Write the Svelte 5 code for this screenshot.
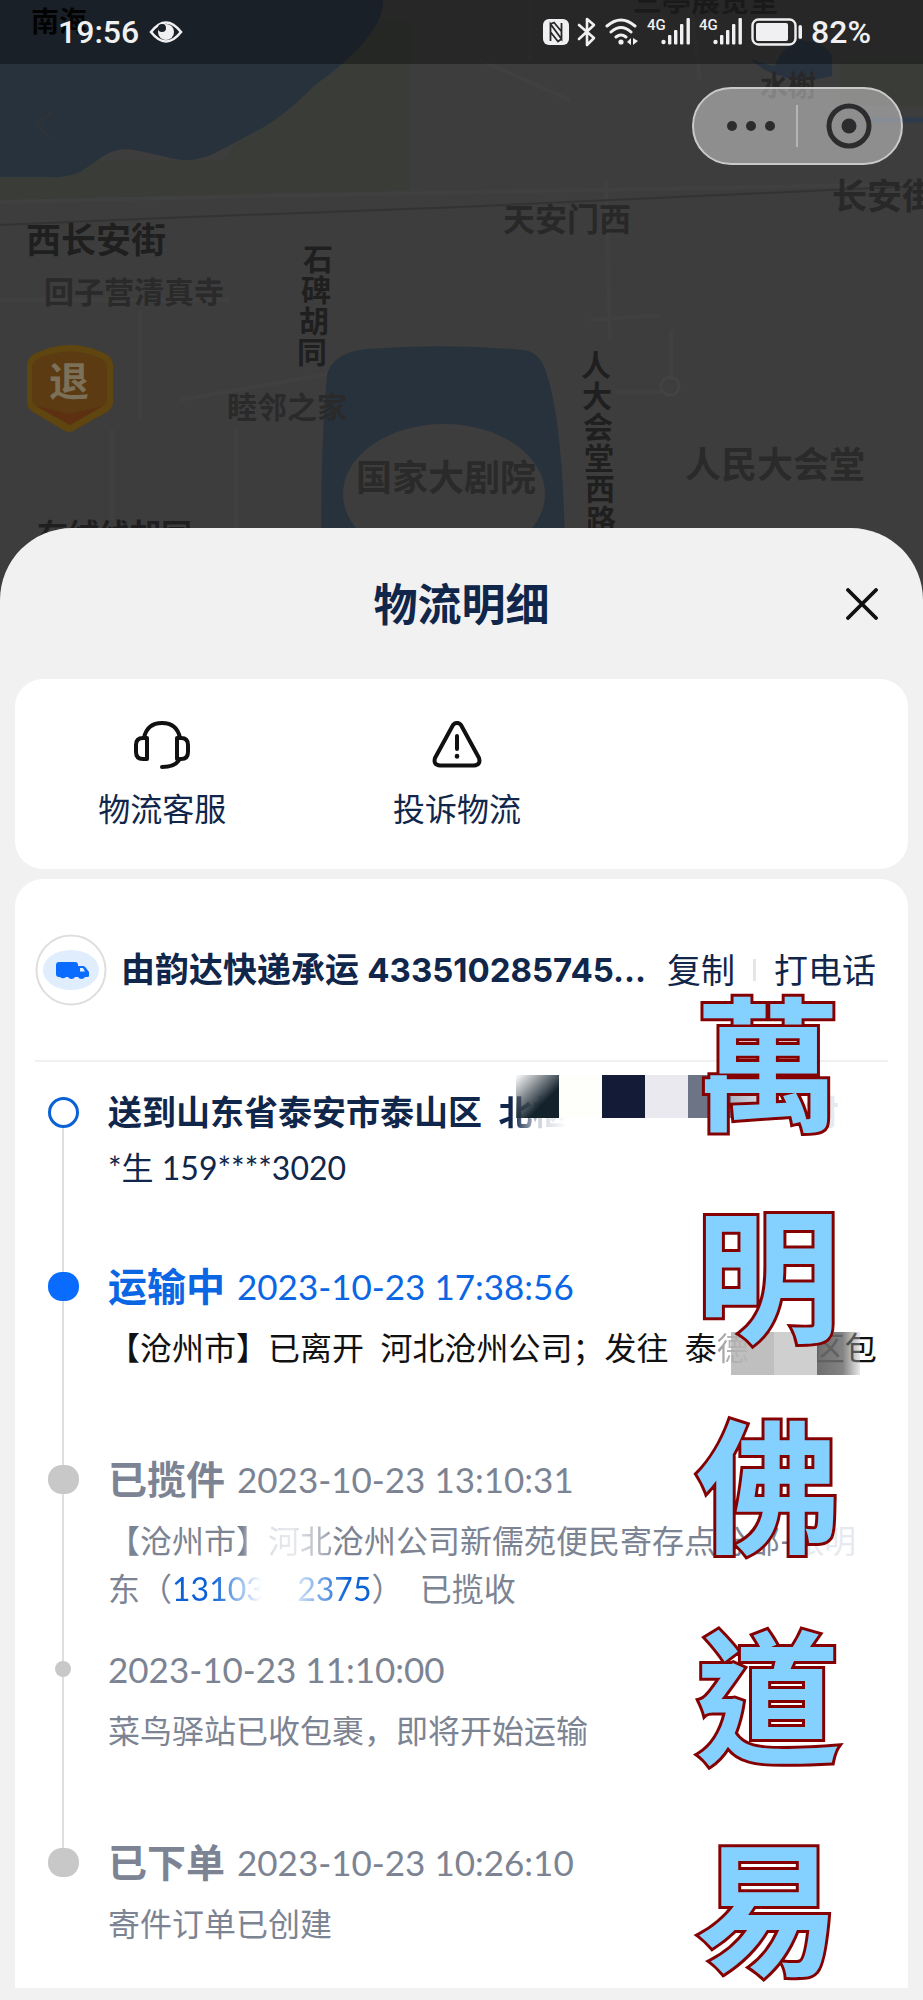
<script lang="ts">
	type Step = {
		kind: 'target' | 'active' | 'done' | 'minor';
		title?: string;
		time?: string;
		gap: 'none' | 'small' | 'medium' | 'large';
	};

	const steps: Step[] = [
		{ kind: 'target', gap: 'none' },
		{ kind: 'active', title: '运输中', time: '2023-10-23 17:38:56', gap: 'medium' },
		{ kind: 'done', title: '已揽件', time: '2023-10-23 13:10:31', gap: 'large' },
		{ kind: 'minor', time: '2023-10-23 11:10:00', gap: 'small' },
		{ kind: 'done', title: '已下单', time: '2023-10-23 10:26:10', gap: 'large' },
	];

	const stamp = ['萬', '明', '佛', '道', '易'];

	// Street and place names on the map, x/y is the text baseline start
	const labels = [
		{ text: '南海', x: 31, y: 32, size: 28, tone: 'black' },
		{ text: '三亭展览室', x: 633, y: 12, size: 29, tone: 'mid' },
		{ text: '水榭', x: 760, y: 96, size: 28, tone: 'mid' },
		{ text: '西长安街', x: 26, y: 253, size: 35, tone: 'dark' },
		{ text: '天安门西', x: 503, y: 231, size: 32, tone: 'mid' },
		{ text: '长安街', x: 832, y: 209, size: 35, tone: 'mid' },
		{ text: '回子营清真寺', x: 44, y: 303, size: 30, tone: 'soft' },
		{ text: '睦邻之家', x: 227, y: 418, size: 30, tone: 'soft' },
		{ text: '国家大剧院', x: 356, y: 491, size: 36, tone: 'soft' },
		{ text: '人民大会堂', x: 685, y: 478, size: 36, tone: 'soft' },
		{ text: '在绒线胡同', x: 37, y: 546, size: 31, tone: 'dark' },
	];

	const lane = ['石', '碑', '胡', '同'];
	const road = ['人', '大', '会', '堂', '西', '路'];
</script>

{#snippet signal()}
	<svg class="signal" viewBox="0 0 44 28" width="44" height="28" fill="#f0f0f2">
		<text x="0" y="12" font-family="Roboto" font-size="15" font-weight="500">4G</text>
		<circle cx="16.5" cy="24" r="2.2" />
		<rect x="21" y="17" width="3.4" height="9.5" rx="1" />
		<rect x="27" y="12" width="3.4" height="14.5" rx="1" />
		<rect x="33" y="6" width="3.4" height="20.5" rx="1" />
		<rect x="39.5" y="0" width="3.4" height="26.5" rx="1" />
	</svg>
{/snippet}

<div class="page">
	<header class="map">
		<svg class="map__canvas" viewBox="0 0 923 640" preserveAspectRatio="xMinYMin slice" aria-hidden="true">
			<rect width="923" height="640" fill="#3d3d3d" />
			<path d="M0 160H410V190L0 200z M270 100L382 20H410V190H200z" fill="#3a3c38" />
			<path d="M0 0H383Q384 18 364 42Q345 64 315 85Q285 115 262 128L215 153Q195 163 175 159Q150 153 134 150Q118 147 105 155L80 172Q66 178 50 177L0 177z" fill="#28323c" />
			<path d="M750 58Q762 64 775 66Q782 46 800 40Q826 42 832 56V76Q800 84 782 76Q762 72 750 58z" fill="#29333f" />
			<path d="M840 60H923V106H840z" fill="#3a3c38" />
			<g fill="none" stroke="#404041" stroke-width="4">
				<path d="M530 0V60M690 0L700 80M606 180L610 340M590 320L660 315M0 202L260 196L923 184" />
				<path d="M140 310V420M180 400L350 370M615 392H665M671 330V380" />
				<path d="M0 300H230M112 430V520M236 430V528M480 60L570 100" />
			</g>
			<path d="M0 225L165 218L461 207L830 190L923 186" fill="none" stroke="#333" stroke-width="2" />
			<circle cx="670" cy="386" r="9" fill="none" stroke="#434343" stroke-width="3" />
			<path d="M323 640Q318 470 327 375Q333 352 368 349Q445 343 523 350Q541 352 547 375Q568 440 565 640z" fill="#28323c" />
			<ellipse cx="444" cy="494" rx="101" ry="70" fill="#3d3d3d" />
			<path d="M870 120H923" stroke="#2f3b4a" stroke-width="5" />

			{#each labels as label}
				<text x={label.x} y={label.y} font-size={label.size} class="label label--{label.tone}">{label.text}</text>
			{/each}
			{#each lane as char, i}
				<text x={303 - i * 2} y={270 + i * 31} font-size="30" class="label label--dark">{char}</text>
			{/each}
			{#each road as char, i}
				<text x={581 + i} y={376 + i * 31} font-size="30" class="label label--dark">{char}</text>
			{/each}

			<!-- Faint back arrow -->
			<path d="M52 112L36 125L52 138" fill="none" stroke="#2d3338" stroke-width="4" />

			<!-- Refund shield -->
			<path d="M34 354Q70 336 106 354Q113 358 113 366V402Q113 408 107 412L73 431Q69 433 65 431L33 412Q27 408 27 402V366Q27 358 34 354z" fill="#5f450f" />
			<path d="M38 359Q70 344 102 359Q107 362 107 368V399Q107 403 103 406L70 425L36 406Q32 403 32 399V368Q32 362 38 359z" fill="#5c3a12" />
			<path d="M103 406L70 425L36 406L70 414z" fill="#5c3010" />
			<text x="49" y="396" font-size="40" class="label shield">退</text>
		</svg>

		<div class="status">
			<div class="status__group">
				<span class="status__time">19:56</span>
				<svg viewBox="0 0 34 24" width="34" height="24" fill="none">
					<path d="M2 12Q17-7 32 12Q17 31 2 12z" stroke="#f0f0f2" stroke-width="2.6" />
					<circle cx="17" cy="12" r="8" fill="#f0f0f2" />
					<circle cx="13" cy="8" r="4" fill="#1c2129" />
				</svg>
			</div>
			<div class="status__group status__group--right">
				<svg viewBox="0 0 26 26" width="26" height="26">
					<rect width="26" height="26" rx="6" fill="#f0f0f2" />
					<path d="M7.5 22V5L18.5 20V4M7.5 5L11 3.5L18.5 12.5M7.5 13L15 22.5L18.5 20" fill="none" stroke="#272727" stroke-width="1.8" />
				</svg>
				<svg viewBox="0 0 20 30" width="20" height="30" fill="none" stroke="#f0f0f2" stroke-width="2.6" stroke-linejoin="round" stroke-linecap="round">
					<path d="M2 8L17 21L10 28V2L17 8L2 22" />
				</svg>
				<svg viewBox="0 0 34 28" width="34" height="28" fill="none" stroke="#f0f0f2" stroke-width="3" stroke-linecap="round">
					<path d="M2 8Q16-4 30 8M6 14Q16 5 26 14M11 19Q16 15 21 19" />
					<circle cx="16" cy="24" r="2.6" fill="#f0f0f2" stroke="none" />
					<path d="M22 24L26 20V27zM33 23L28 20V27z" fill="#f0f0f2" stroke="none" />
				</svg>
				{@render signal()}
				{@render signal()}
				<svg viewBox="0 0 52 28" width="52" height="28">
					<rect x="1.5" y="1.5" width="43" height="25" rx="6" fill="none" stroke="#f0f0f2" stroke-width="2.4" />
					<rect x="5" y="5" width="32" height="18" rx="2" fill="#f0f0f2" />
					<rect x="47.5" y="7" width="3.5" height="14" rx="1.7" fill="#f0f0f2" />
				</svg>
				<span class="status__battery">82%</span>
			</div>
		</div>

		<div class="capsule">
			<button class="capsule__more" aria-label="更多">
				<svg viewBox="0 0 50 12" width="50" height="12" fill="#2c2c2e">
					<circle cx="6" cy="6" r="5" /><circle cx="25" cy="6" r="5" /><circle cx="44" cy="6" r="5" />
				</svg>
			</button>
			<button class="capsule__exit" aria-label="退出">
				<svg viewBox="0 0 46 46" width="46" height="46" fill="none">
					<circle cx="23" cy="23" r="20" stroke="#2c2c2e" stroke-width="5" />
					<circle cx="23" cy="23" r="7.5" fill="#2c2c2e" />
				</svg>
			</button>
		</div>
	</header>

	<main class="sheet">
		<div class="sheet__head">
			<h1>物流明细</h1>
			<button class="sheet__close" aria-label="关闭">
				<svg viewBox="0 0 32 32" width="32" height="32" stroke="#111" stroke-width="3.8" stroke-linecap="round"><path d="M2 2L30 30M30 2L2 30" /></svg>
			</button>
		</div>

		<section class="card shortcuts">
			<button class="shortcut">
				<svg viewBox="0 0 58 48" width="58" height="48" fill="none" stroke="#111" stroke-width="4" stroke-linecap="round" stroke-linejoin="round">
					<path d="M11 17Q14 2 29 2Q44 2 47 17" />
					<path d="M14 17V38H10Q3 38 3 31V24Q3 17 10 17zM44 17V38H48Q55 38 55 31V24Q55 17 48 17z" />
					<path d="M46 39Q42 46 29 46" />
				</svg>
				物流客服
			</button>
			<button class="shortcut">
				<svg viewBox="0 0 50 48" width="50" height="48" fill="none" stroke="#111" stroke-width="4" stroke-linecap="round" stroke-linejoin="round">
					<path d="M21 4Q25 0 29 4L47 37Q49 44 42 44.5H8Q1 44 3 37z" />
					<path d="M25 15V28" /><path d="M25 35V35.5" stroke-width="4.5" />
				</svg>
				投诉物流
			</button>
		</section>

		<section class="card detail">
			<div class="carrier">
				<div class="carrier__badge">
					<svg viewBox="0 0 72 72" width="72" height="72">
						<circle cx="36" cy="36" r="34.5" fill="#fff" stroke="#dedede" stroke-width="2" />
						<ellipse cx="36" cy="36" rx="28" ry="20" fill="#e0edfd" />
						<path d="M24 28H40Q43 28 43 31V43H40A4 4 0 0 1 33 43H31A4 4 0 0 1 25 43H24Q21 43 21 40V31Q21 28 24 28z" fill="#0a6cff" />
						<path d="M43 32H48Q50 32 51 34L54 38V42Q54 43 52 43H50A4 4 0 0 1 43 43z" fill="#0a6cff" />
						<path d="M45 34H48L50 37.5H45z" fill="#e0edfd" />
					</svg>
				</div>
				<strong class="carrier__name">由韵达快递承运 <span class="carrier__no">433510285745...</span></strong>
				<div class="carrier__actions">
					<button>复制</button>
					<button>打电话</button>
				</div>
			</div>

			<ol class="timeline">
				{#each steps as step, i}
					<li class="step step--{step.kind} step--gap-{step.gap}">
						<span class="step__dot"></span>
						{#if i === 0}
							<p class="step__address">
								送到山东省泰安市泰山区&nbsp;&nbsp;<span class="fade-out">北枢</span><span class="step__blank"></span><span class="ghost">村</span>
								<span class="mosaic mosaic--address"><i></i><i></i><i></i><i></i><i></i><i></i></span>
							</p>
							<p class="step__person">*生 159****3020</p>
						{:else}
							<p class="step__head">
								{#if step.title}<strong>{step.title}</strong>{/if}
								<time>{step.time}</time>
							</p>
							<p class="step__text">
								{#if i === 1}
									【沧州市】已离开&nbsp;&nbsp;河北沧州公司；发往&nbsp;&nbsp;泰<span class="fade-black">德</span>　　<span class="dim">区</span>包
									<span class="mosaic mosaic--route"><i></i><i></i><i></i></span>
								{:else if i === 2}
									【沧州市<span class="fade-close">】</span><span class="fade-in">河北</span>沧州公司新儒苑便民寄存点分部-<span class="ghost">张明</span>东（<a class="phone" href="tel:13103">13103&ensp;&nbsp;&nbsp;2375</a>）&nbsp;&nbsp;已揽收
								{:else if i === 3}
									菜鸟驿站已收包裹，即将开始运输
								{:else}
									寄件订单已创建
								{/if}
							</p>
						{/if}
					</li>
				{/each}
			</ol>

			<div class="stamp">
				{#each stamp as char}
					<span>{char}</span>
				{/each}
			</div>
		</section>
	</main>
</div>

<style>
	:global(body) {
		margin: 0;
		background: #f1f1f1;
	}

	.page {
		font-family: Lato, 'Noto Sans CJK SC', sans-serif;
		color: #10264a;
		overflow: hidden;
	}

	h1, p, ol {
		margin: 0;
		padding: 0;
	}

	button {
		border: none;
		background: none;
		padding: 0;
		color: inherit;
		font: inherit;
		cursor: pointer;
	}

	svg {
		display: block;
		flex: none;
	}

	/* Map */
	.map {
		position: relative;
		height: 528px;
		background: #3d3d3d;
	}

	.map__canvas {
		position: absolute;
		top: 0;
		left: 0;
		width: 100%;
		height: 640px;
	}

	.label {
		font-family: 'Noto Sans CJK SC', sans-serif;
		font-weight: 700;
	}

	.label--black { fill: #050505; }
	.label--dark { fill: #1f1f1f; }
	.label--mid { fill: #282828; }
	.label--soft { fill: #2a2a2a; }
	.shield { fill: #7b7058; }

	.status {
		position: relative;
		display: flex;
		align-items: center;
		justify-content: space-between;
		height: 64px;
		padding: 0 52px 0 58px;
		box-sizing: border-box;
		background: rgba(0, 0, 0, 0.35);
		color: #f0f0f2;
		font-family: Roboto, sans-serif;
		font-weight: 500;
	}

	.status__group {
		display: flex;
		align-items: center;
		gap: 10px;
	}

	.status__group--right {
		gap: 8px;
	}

	.status__time,
	.status__battery {
		font-size: 32px;
		line-height: 64px;
	}

	.capsule {
		position: absolute;
		top: 87px;
		right: 20px;
		display: flex;
		align-items: center;
		width: 211px;
		height: 78px;
		box-sizing: border-box;
		border: 2px solid #c9c9c9;
		border-radius: 39px;
		background: rgba(255, 255, 255, 0.42);
	}

	.capsule button {
		display: flex;
		align-items: center;
		justify-content: center;
		width: 50%;
		height: 42px;
		box-sizing: border-box;
	}

	.capsule .capsule__more {
		padding-left: 12px;
		border-right: 2px solid #b5b5b5;
	}

	/* Sheet */
	.sheet {
		position: relative;
		padding: 0 15px 13px;
		border-radius: 72px 72px 0 0;
		background: #f1f1f1;
	}

	.sheet__head {
		display: grid;
		grid-template-columns: 1fr auto 1fr;
		align-items: center;
		height: 151px;
		padding: 0 30px;
	}

	.sheet__head h1 {
		grid-column: 2;
		font-size: 44px;
		line-height: 64px;
		font-weight: 700;
	}

	.sheet__close {
		justify-self: end;
	}

	.card {
		border-radius: 28px;
		background: #fff;
	}

	.shortcuts {
		display: flex;
		height: 190px;
		margin-bottom: 10px;
	}

	.shortcut {
		display: flex;
		flex-direction: column;
		align-items: center;
		gap: 16px;
		width: 33%;
		padding-top: 42px;
		font-size: 32px;
		line-height: 48px;
	}

	.detail {
		position: relative;
		padding: 0 20px 40px;
		border-radius: 28px 28px 0 0;
	}

	.carrier {
		display: flex;
		align-items: center;
		height: 181px;
		border-bottom: 2px solid #f0f0f0;
		font-size: 34px;
		line-height: 48px;
		white-space: nowrap;
	}

	.carrier__badge {
		margin-right: 14px;
	}

	.carrier__name {
		flex: 1;
	}

	.carrier__no {
		font-family: Inter, sans-serif;
		font-size: 33px;
	}

	.carrier__actions {
		display: flex;
		align-items: center;
		padding-right: 12px;
	}

	.carrier__actions button + button {
		display: flex;
		align-items: center;
	}

	.carrier__actions button + button::before {
		content: '';
		width: 3px;
		height: 22px;
		margin: 0 18px;
		background: #e6e6e6;
	}

	/* Timeline */
	.timeline {
		padding-top: 26px;
		list-style: none;
	}

	.step {
		position: relative;
		padding-left: 73px;
		color: #7c8493;
		font-size: 32px;
		line-height: 48px;
	}

	.step--gap-small { padding-top: 32px; }
	.step--gap-medium { padding-top: 70px; }
	.step--gap-large { padding-top: 83px; }

	/* rail down to the next dot */
	.step::before {
		content: '';
		position: absolute;
		top: 0;
		bottom: 0;
		left: 27px;
		width: 2px;
		background: #dedede;
	}

	.step:first-child::before { top: 24px; }
	.step:last-child::before { bottom: 90px; }

	.step__dot {
		position: absolute;
		left: 13px;
		width: 31px;
		height: 29px;
		margin-top: 10px;
		border-radius: 14px;
		background: #c8c8c8;
	}

	.step--target .step__dot {
		height: 31px;
		margin-top: 9px;
		box-sizing: border-box;
		border: 3px solid #0b62d6;
		border-radius: 50%;
		background: #fff;
	}

	.step--active .step__dot { background: #0a6cff; }

	.step--minor .step__dot {
		left: 20px;
		width: 16px;
		height: 16px;
		margin-top: 16px;
		border-radius: 50%;
	}

	.step__address {
		position: relative;
		color: #10264a;
		font-size: 34px;
		font-weight: 700;
		white-space: nowrap;
	}

	.step__blank {
		display: inline-block;
		width: 238px;
	}

	.step__person {
		margin-top: 8px;
		color: #10264a;
	}

	.step__head {
		display: flex;
		align-items: center;
		gap: 12px;
		font-size: 35px;
	}

	.step__head strong { font-size: 39px; }
	.step--active .step__head { color: #0b66e4; }

	.step__text {
		position: relative;
		max-width: 778px;
		margin-top: 14px;
	}

	.step--active .step__text { color: #111; }

	.phone {
		background: linear-gradient(90deg, #0b62d6 20%, transparent 45%, transparent 58%, #0b62d6 88%);
		background-clip: text;
		-webkit-background-clip: text;
		color: transparent;
		text-decoration: none;
	}

	.fade-out, .fade-in, .fade-black, .fade-close {
		background-clip: text;
		-webkit-background-clip: text;
		color: transparent;
	}

	.fade-out { background-image: linear-gradient(90deg, #10264a 20%, #d0d4dc 60%, transparent); }
	.fade-in { background-image: linear-gradient(90deg, #dde0e5, #e8eaee 40%, #9aa1ad); }
	.fade-black { background-image: linear-gradient(90deg, #999, #e0e0e0); }
	.fade-close { background-image: linear-gradient(90deg, #7c8493 20%, #e8eaee 60%); }
	.ghost { color: #e6eaef; }
	.dim { color: #777; }

	/* Pixelated cover over private parts */
	.mosaic {
		position: absolute;
		display: flex;
	}

	.mosaic i {
		width: 43px;
		height: 43px;
	}

	.mosaic--address { left: 408px; top: -13px; }
	.mosaic--address i:nth-child(1) { background: linear-gradient(135deg, rgba(255, 255, 255, 0.2), #14222c 65%); }
	.mosaic--address i:nth-child(2) { background: #fefefa; }
	.mosaic--address i:nth-child(3) { background: #141b36; }
	.mosaic--address i:nth-child(4) { background: #eae9ef; }
	.mosaic--address i:nth-child(5) { background: #6c7486; }
	.mosaic--address i:nth-child(6) { background: linear-gradient(90deg, #adb0c0, #e8e9ee); }

	.mosaic--route { left: 623px; top: 8px; }
	.mosaic--route i:nth-child(1) { background: rgba(170, 170, 170, 0.75); }
	.mosaic--route i:nth-child(2) { background: #cfcfcf; }
	.mosaic--route i:nth-child(3) { background: linear-gradient(90deg, rgba(95, 95, 95, 0.9), rgba(90, 90, 90, 0.75) 60%, rgba(200, 200, 200, 0.4)); }

	.stamp {
		position: absolute;
		top: 106px;
		right: 68px;
		display: flex;
		flex-direction: column;
		gap: 67px;
		color: #84d0ff;
		font-family: 'Noto Sans CJK TC', sans-serif;
		font-size: 144px;
		font-weight: 700;
		line-height: 144px;
		-webkit-text-stroke: 6px #850000;
		paint-order: stroke fill;
		pointer-events: none;
	}
</style>
